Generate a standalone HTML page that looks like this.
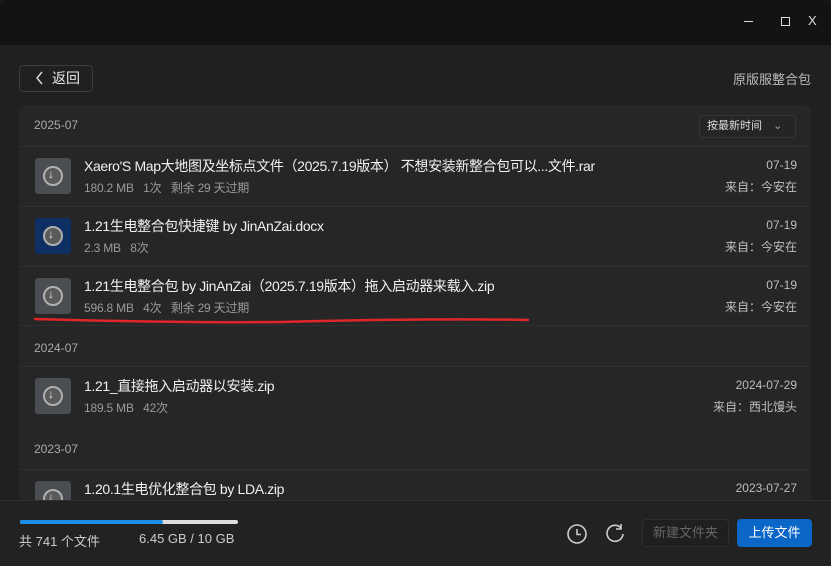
<!DOCTYPE html>
<html><head><meta charset="utf-8"><style>
*{margin:0;padding:0;box-sizing:border-box}
body{width:831px;height:566px;overflow:hidden;background:#1a1a1a;font-family:"Liberation Sans","Noto Sans CJK SC",sans-serif;color:#e6e6e6;position:relative}
.tb{position:absolute;left:0;top:0;width:831px;height:45px;background:#131313;border-radius:6px 6px 0 0}
.main{position:absolute;left:0;top:45px;width:831px;height:521px;background:#202020}
.abs{position:absolute}
.back{left:19px;top:65px;width:74px;height:27px;border:1px solid #3c3c3c;border-radius:4px;font-size:14px;color:#e8e8e8;line-height:25px;padding-left:32px}
.panel{left:19px;top:105px;width:792px;height:420px;background:#262626;border-radius:6px;overflow:hidden}
.row{position:absolute;left:0;width:792px;height:60px;border-top:1px solid #2f2f2f}
.ic{position:absolute;left:16px;top:11px;width:36px;height:36px;background:#4a4d52;border-radius:3px}
.ic i{position:absolute;left:8px;top:8px;width:20px;height:20px;border-radius:50%;border:2px solid #b0b0b0;background:#5a5a5a}
.ic i:after{content:"↓";position:absolute;left:3px;top:-1px;font-size:12px;color:#eee;font-style:normal}
.nm{position:absolute;left:65px;top:9px;font-size:14px;color:#f0f0f0;white-space:nowrap;letter-spacing:-0.35px}
.mt{position:absolute;left:65px;top:32px;font-size:12px;color:#9a9a9a;white-space:pre;letter-spacing:-0.2px}
.dt{position:absolute;right:14px;top:11px;font-size:12px;color:#bdbdbd}
.fr{position:absolute;right:14px;top:31px;font-size:12px;color:#bdbdbd}
.gh{position:absolute;left:15px;font-size:12px;color:#aaa}
.bot{left:0;top:500px;width:831px;height:66px;background:#222;border-top:1px solid #303030}
</style></head><body>
<div class="tb"></div>
<div class="abs" style="left:744px;top:21px;width:9px;height:1px;background:#ddd"></div>
<div class="abs" style="left:781px;top:17px;width:9px;height:9px;border:1.5px solid #ddd"></div>
<div class="abs" style="left:808px;top:13px;font-size:13px;color:#ddd">X</div>
<div class="main"></div>
<div class="abs back">返回</div>
<svg class="abs" style="left:35px;top:71px" width="10" height="14"><path d="M7 1L2 7l5 6" stroke="#ddd" stroke-width="1.4" fill="none"/></svg>
<div class="abs" style="left:733px;top:69px;font-size:13px;color:#bbb">原版服整合包</div>
<div class="abs panel">
 <div class="gh" style="top:13px">2025-07</div>
 <div class="abs" style="left:680px;top:10px;width:97px;height:23px;border:1px solid #363636;border-radius:4px;background:#252525;font-size:11px;color:#ddd;line-height:21px;padding-left:7px">按最新时间 <span style="margin-left:8px;color:#aaa">⌄</span></div>
 <div class="row" style="top:41px"><div class="ic"><i></i></div><div class="nm">Xaero'S Map大地图及坐标点文件（2025.7.19版本） 不想安装新整合包可以...文件.rar</div><div class="mt">180.2 MB   1次   剩余 29 天过期</div><div class="dt">07-19</div><div class="fr">来自：今安在</div></div>
 <div class="row" style="top:101px"><div class="ic" style="background:#0d2f63"><i></i></div><div class="nm">1.21生电整合包快捷键 by JinAnZai.docx</div><div class="mt">2.3 MB   8次</div><div class="dt">07-19</div><div class="fr">来自：今安在</div></div>
 <div class="row" style="top:161px;border-bottom:1px solid #2f2f2f"><div class="ic"><i></i></div><div class="nm">1.21生电整合包 by JinAnZai（2025.7.19版本）拖入启动器来载入.zip</div><div class="mt">596.8 MB   4次   剩余 29 天过期</div><div class="dt">07-19</div><div class="fr">来自：今安在</div></div>
 <svg class="abs" style="left:13px;top:209px" width="500" height="12"><path d="M2 5 Q150 9 250 8 Q400 4 497 6" stroke="#e0262a" stroke-width="2.5" fill="none"/></svg>
 <div class="gh" style="top:236px">2024-07</div>
 <div class="row" style="top:261px"><div class="ic"><i></i></div><div class="nm">1.21_直接拖入启动器以安装.zip</div><div class="mt">189.5 MB   42次</div><div class="dt">2024-07-29</div><div class="fr">来自：西北馒头</div></div>
 <div class="gh" style="top:337px">2023-07</div>
 <div class="row" style="top:364px"><div class="ic"><i></i></div><div class="nm">1.20.1生电优化整合包 by LDA.zip</div><div class="dt">2023-07-27</div></div>
</div>
<div class="abs bot"></div>
<div class="abs" style="left:20px;top:520px;width:218px;height:4px;background:#ddd;border-radius:2px"></div>
<div class="abs" style="left:20px;top:520px;width:143px;height:4px;background:#1a8ee8;border-radius:2px"></div>
<div class="abs" style="left:19px;top:531px;font-size:13px;color:#ccc">共 741 个文件</div>
<div class="abs" style="left:139px;top:531px;font-size:13px;color:#ccc">6.45 GB / 10 GB</div>
<svg class="abs" style="left:566px;top:523px" width="22" height="22"><circle cx="11" cy="11" r="9" stroke="#ccc" stroke-width="1.6" fill="none"/><path d="M11 6v5.5h4" stroke="#ccc" stroke-width="1.6" fill="none"/></svg>
<svg class="abs" style="left:604px;top:522px" width="22" height="22"><path d="M17 6A8 8 0 1 0 19 12" stroke="#ccc" stroke-width="1.6" fill="none"/><path d="M17 2v5h-5" stroke="#ccc" stroke-width="1.6" fill="none"/></svg>
<div class="abs" style="left:642px;top:519px;width:87px;height:28px;border:1px solid #2e2e2e;background:#1f1f1f;border-radius:4px;font-size:13px;color:#666;text-align:center;line-height:26px">新建文件夹</div>
<div class="abs" style="left:737px;top:519px;width:75px;height:28px;background:#0a67c8;border-radius:4px;font-size:13px;color:#fff;text-align:center;line-height:28px">上传文件</div>
</body></html>
